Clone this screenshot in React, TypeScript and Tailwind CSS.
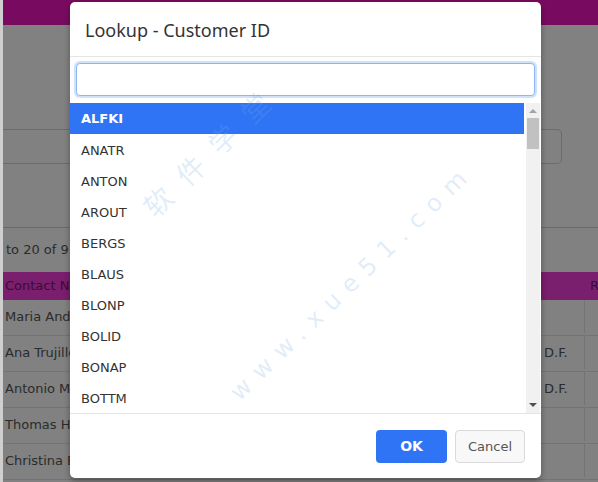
const customers = ["ALFKI", "ANATR", "ANTON", "AROUT", "BERGS", "BLAUS", "BLONP", "BOLID", "BONAP", "BOTTM"];

const rows = [
    { name: "Maria Anders", region: "" },
    { name: "Ana Trujillo", region: "D.F." },
    { name: "Antonio Moreno", region: "D.F." },
    { name: "Thomas Hardy", region: "" },
    { name: "Christina Berglund", region: "" },
];

function Background() {
    return (
        <div className="w-full">
            <div className="h-[25px] bg-[#780b60]" />
            <div className="h-[104px]" />
            <div className="h-[35px] w-[562px] border border-l-0 border-[#6c6c6c] rounded-r-[5px]" />
            <div className="h-[63px]" />
            <div className="h-px bg-[#6a6a6a]" />
            <div className="h-[44px] flex items-center pl-[6px] text-[13px] text-[#2b2b2b]">
                to 20 of 91 entries
            </div>
            <div className="h-[28px] flex items-center bg-[#7a1e6e] text-[13px] text-[#3a0c35] whitespace-nowrap">
                <div className="w-[540px] shrink-0 pl-[5px]">Contact Name</div>
                <div className="w-[45px] shrink-0 h-full" />
                <div className="shrink-0 pl-[5px]">Region</div>
            </div>
            {rows.map((row) => (
                <div
                    key={row.name}
                    className="h-[36px] flex items-center pb-[2px] border-b border-[#747474] text-[13px] text-[#2b2b2b] whitespace-nowrap"
                >
                    <div className="w-[540px] shrink-0 pl-[5px] overflow-hidden">{row.name}</div>
                    <div className="w-[45px] shrink-0 h-full flex items-center pl-[4px] border-r border-[#747474]">
                        {row.region}
                    </div>
                    <div className="shrink-0 pl-[5px]" />
                </div>
            ))}
        </div>
    );
}

function Watermark() {
    return (
        <div className="absolute inset-0 pointer-events-none overflow-hidden">
            <div className="absolute left-[142px] top-[146px] -translate-x-1/2 -translate-y-1/2 rotate-[-44deg] whitespace-nowrap text-[28px] tracking-[17px] text-[rgba(120,170,230,0.22)] font-['Noto_Sans_CJK_SC',sans-serif]">
                软件学堂
            </div>
            <div className="absolute left-[282px] top-[280px] -translate-x-1/2 -translate-y-1/2 rotate-[-44deg] whitespace-nowrap text-[24px] tracking-[10px] text-[rgba(120,170,230,0.22)]">
                www.xue51.com
            </div>
        </div>
    );
}

function LookupDialog() {
    return (
        <div className="absolute left-[70px] top-[2px] w-[471px] h-[476px] bg-white rounded-[5px] shadow-[0_3px_6px_rgba(0,0,0,0.35)] overflow-hidden flex flex-col">
            <div className="h-[55px] shrink-0 flex items-center px-[15px] pt-[3px] text-[18px] text-[#333] font-['Noto_Sans',sans-serif] border-b border-[#e5e5e5]">
                Lookup - Customer ID
            </div>
            <div className="pt-[6px] px-[6px] bg-[#fdfdfd]">
                <input
                    className="w-[459px] h-[33px] rounded-[4px] border border-[#8fb6ec] bg-white outline-none shadow-[0_0_0_2px_rgba(150,190,240,0.45)]"
                    defaultValue=""
                />
            </div>
            <div className="mt-[7px] h-[310px] flex shrink-0">
                <div className="flex-1">
                    {customers.map((id, i) => (
                        <div
                            key={id}
                            className={
                                i === 0
                                    ? "h-[31px] flex items-center pl-[11px] pt-[1px] text-[13px] font-bold text-white bg-[#2f74f5]"
                                    : "h-[31px] flex items-center pl-[11px] pt-[2px] text-[13px] text-[#333]"
                            }
                        >
                            {id}
                        </div>
                    ))}
                </div>
                <div className="w-[17px] pl-[2px] pr-px">
                    <div className="h-full bg-[#f1f1f1] flex flex-col">
                        <div className="h-[15px] flex items-center justify-center">
                            <div className="w-0 h-0 border-l-[4px] border-r-[4px] border-b-[4px] border-l-transparent border-r-transparent border-b-[#a3a3a3]" />
                        </div>
                        <div className="h-[31px] mx-[1px] bg-[#c1c1c1]" />
                        <div className="flex-1" />
                        <div className="h-[16px] flex items-center justify-center">
                            <div className="w-0 h-0 border-l-[4px] border-r-[4px] border-t-[4px] border-l-transparent border-r-transparent border-t-[#505050]" />
                        </div>
                    </div>
                </div>
            </div>
            <div className="flex-1 border-t border-[#e5e5e5] flex justify-end gap-[8px] pt-[16px] pr-[16px]">
                <button className="w-[71px] h-[33px] rounded-[4px] bg-[#2f74f5] text-white font-bold text-[14px]">
                    OK
                </button>
                <button className="w-[70px] h-[33px] rounded-[4px] bg-[#f8f8f8] border border-[#dadada] text-[#555] text-[13px]">
                    Cancel
                </button>
            </div>
            <Watermark />
        </div>
    );
}

export default function App() {
    return (
        <div className="relative w-[598px] h-[482px] overflow-hidden bg-[#818181] font-['DejaVu_Sans',sans-serif]">
            <div className="absolute left-0 top-0 bottom-0 w-[3px] bg-[#cfcfcf]" />
            <Background />
            <LookupDialog />
        </div>
    );
}
